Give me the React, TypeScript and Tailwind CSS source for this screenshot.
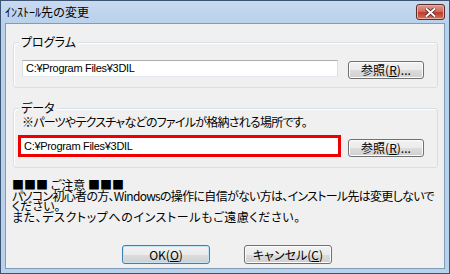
import type { ReactNode } from "react";

const jp = "font-['Noto_Sans_CJK_JP',sans-serif]";
const palt = "[font-feature-settings:'palt']";

function WinButton({ children, primary, className = "" }: { children: ReactNode; primary?: boolean; className?: string }) {
  return (
    <button
      className={
        "flex items-center justify-center rounded-[3px] border text-[12px] leading-none text-black " +
        palt +
        " bg-[linear-gradient(#f2f2f2_0%,#ebebeb_50%,#dddddd_50%,#cfcfcf_100%)] " +
        (primary
          ? "border-[#3c7fb1] shadow-[inset_0_0_0_1px_#c4e5f6] "
          : "border-[#707070] shadow-[inset_0_0_0_1px_#fcfcfc] ") +
        className
      }
    >
      {children}
    </button>
  );
}

function GroupBox({ label, className = "", children }: { label: string; className?: string; children: ReactNode }) {
  return (
    <div
      className={
        "relative ml-[7px] w-[425px] rounded-[3px] border border-[#d5dfe5] shadow-[inset_1px_1px_0_#ffffff] " + className
      }
    >
      {/* label sits over the top border */}
      <span
        className={
          "absolute left-[5px] top-[-8px] bg-[#f0f0f0] px-[2px] text-[12px] leading-[14px] text-black " + palt
        }
      >
        {label}
      </span>
      {children}
    </div>
  );
}

function PathField({ className = "" }: { className?: string }) {
  return (
    <div
      className={
        "flex items-center bg-white pl-[3px] font-['Liberation_Sans',sans-serif] text-[11px] tracking-[-0.3px] text-black " +
        className
      }
    >
      C:¥Program Files¥3DIL
    </div>
  );
}

export default function App() {
  return (
    <div className={"h-[274px] w-[450px] overflow-hidden bg-white " + jp}>
      <div className="flex h-full w-full flex-col border border-[#3d5572] bg-[#b9d1ea]">
        {/* title bar */}
        <div className="flex h-[22px] items-center justify-between bg-[linear-gradient(#c8daf0,#b9d1ea)] pl-[4px] pr-[4px]">
          <span className="text-[12px] leading-none text-black">ｲﾝｽﾄｰﾙ先の変更</span>
          <div className="flex h-[16px] w-[29px] items-center justify-center rounded-[3px] border border-[#5b2b2b] bg-[linear-gradient(#e09a8c_0%,#d07060_45%,#c0392b_55%,#d2755f_100%)] shadow-[inset_0_0_0_1px_#eab0a4]">
            <svg width="11" height="9" viewBox="0 0 11 9">
              <path d="M1.5 1 L9.5 8 M9.5 1 L1.5 8" stroke="#4a1a1a" strokeWidth="3.4" strokeLinecap="square" />
              <path d="M1.5 1 L9.5 8 M9.5 1 L1.5 8" stroke="#ffffff" strokeWidth="2" strokeLinecap="square" />
            </svg>
          </div>
        </div>

        {/* client area */}
        <div className="mx-[4px] mb-[4px] flex flex-1 flex-col border border-[#7f9db9] bg-[#f0f0f0]">
          <GroupBox label="プログラム" className="mt-[18px] h-[46px]">
            <div className="flex items-start pl-[8px] pt-[17px]">
              <PathField className="h-[17px] w-[316px] border border-[#abadb3] border-b-[#e3e9ef] border-x-[#dbdfe6]" />
              <WinButton className="ml-[10px] mt-[1px] h-[18px] w-[76px]">
                参照(<span className="underline">R</span>)...
              </WinButton>
            </div>
          </GroupBox>

          <GroupBox label="データ" className="mt-[20px] h-[60px]">
            <div className={"pl-[8px] pt-[6px] text-[12px] leading-[14px] tracking-[-0.75px] text-black " + palt}>
              ※パーツやテクスチャなどのファイルが格納される場所です。
            </div>
            <div className="mt-[6px] flex items-start pl-[4px]">
              <PathField className="h-[22px] w-[323px] border-[3px] border-[#ee0000] pl-[2px]" />
              <WinButton className="ml-[7px] mt-[4px] h-[18px] w-[76px]">
                参照(<span className="underline">R</span>)...
              </WinButton>
            </div>
          </GroupBox>

          {/* notice */}
          <div className={"ml-[6px] mt-[12px] whitespace-nowrap text-[12px] leading-[10.5px] text-black " + palt}>
            <div>■■■ ご注意 ■■■</div>
            <div className="tracking-[-0.7px]">
              パソコン初心者の方、Windowsの操作に自信がない方は、インストール先は変更しないで
            </div>
            <div>ください。</div>
            <div className="tracking-[0.6px]">また、デスクトップへのインストールもご遠慮ください。</div>
          </div>

          {/* dialog buttons */}
          <div className="mb-[4px] ml-[116px] mt-auto flex gap-[34px]">
            <WinButton primary className="h-[19px] w-[88px]">
              OK(<span className="underline">O</span>)
            </WinButton>
            <WinButton className="h-[19px] w-[88px]">
              キャンセル(<span className="underline">C</span>)
            </WinButton>
          </div>
        </div>
      </div>
    </div>
  );
}
